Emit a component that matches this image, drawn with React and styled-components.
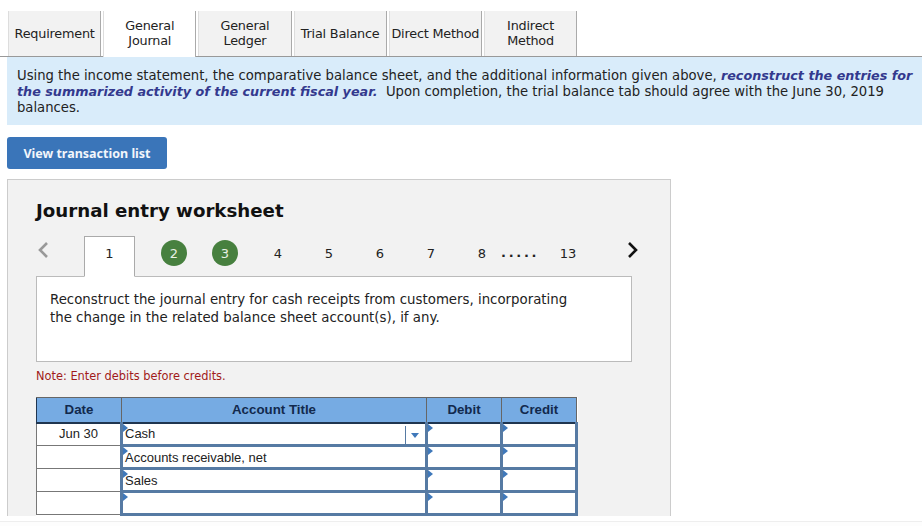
import styled, { createGlobalStyle } from 'styled-components'

const Global = createGlobalStyle`
  html, body {
    margin: 0;
    background: #fff;
    font-family: "DejaVu Sans", Verdana, sans-serif;
    color: #222;
  }
`

const Page = styled.div`
  width: 922px;
  height: 526px;
  overflow: hidden;
  padding-top: 11px;
  box-sizing: border-box;
`

const Tabs = styled.div`
  display: flex;
  gap: 2px;
  padding-left: 8px;
  height: 46px;
  border-bottom: 1px solid #999;
  box-sizing: border-box;
`

const Tab = styled.div`
  width: 93.2px;
  height: ${p => (p.$active ? '46px' : '45px')};
  box-sizing: border-box;
  display: flex;
  align-items: center;
  justify-content: center;
  text-align: center;
  font-size: 12.8px;
  line-height: 15px;
  letter-spacing: -0.2px;
  padding-bottom: ${p => (p.$active ? '2px' : '1px')};
  background: ${p => (p.$active ? '#fff' : '#f2f2f2')};
  border-right: 1px solid #aaa;
  border-left: 1px solid #ddd;
`

const Banner = styled.div`
  margin-left: 7px;
  height: 68px;
  box-sizing: border-box;
  background: #d9ecfa;
  padding: 11px 0 0 10px;
  font-size: 13.2px;
  line-height: 16px;
  em {
    font-size: 12.75px;
    font-weight: bold;
    color: #33398e;
  }
`

const ViewButton = styled.button`
  display: block;
  margin: 12px 0 10px 7px;
  width: 160px;
  height: 32px;
  border: 0;
  border-radius: 3px;
  background: #3a75b9;
  color: #f2f6fb;
  font-family: "Noto Sans", sans-serif;
  font-size: 12.5px;
  font-weight: bold;
`

const Panel = styled.section`
  margin-left: 7px;
  width: 664px;
  box-sizing: border-box;
  background: #f2f2f2;
  border: 1px solid #ccc;
  border-bottom: 0;
  padding: 0 28px;
`

const Title = styled.h2`
  margin: 20px 0 0;
  font-size: 18.2px;
  line-height: 22px;
  font-weight: bold;
  color: #111;
`

const Steps = styled.div`
  display: flex;
  align-items: flex-start;
  height: 40px;
  margin-top: 14px;
  position: relative;
  z-index: 1;
`

const Chevron = styled.svg`
  width: 16px;
  height: 18px;
  flex: none;
  margin-top: 5px;
  margin-left: ${p => p.$left}px;
  margin-right: ${p => p.$right}px;
`

const Step = styled.div`
  width: 26px;
  height: 26px;
  margin-top: 4px;
  margin-right: ${p => p.$gap ?? 25}px;
  flex: none;
  display: flex;
  align-items: center;
  justify-content: center;
  font-size: 13px;
  color: ${p => (p.$done ? '#e8f0e4' : '#222')};
  background: ${p => (p.$done ? '#47803f' : 'transparent')};
  border-radius: 50%;
`

const CurrentStep = styled.div`
  width: 51px;
  height: 41px;
  margin-right: 26px;
  padding-bottom: 6px;
  flex: none;
  box-sizing: border-box;
  display: flex;
  align-items: center;
  justify-content: center;
  font-size: 13px;
  background: #fff;
  border: 1px solid #aaa;
  border-bottom: 1px solid #fff;
`

const Dots = styled.span`
  width: 36px;
  flex: none;
  margin: 9px 18px 0 -19px;
  font-size: 13px;
  font-weight: bold;
  letter-spacing: 2.7px;
  text-align: center;
`

const Prompt = styled.div`
  width: 596px;
  height: 86px;
  box-sizing: border-box;
  background: #fff;
  border: 1px solid #bbb;
  padding: 14px 60px 0 13px;
  font-size: 13.33px;
  line-height: 18px;
`

const Note = styled.p`
  margin: 7px 0 14px;
  font-size: 11.4px;
  line-height: 14px;
  color: #a11a1a;
`

const Sheet = styled.table`
  width: 540px;
  table-layout: fixed;
  border-collapse: collapse;
  font-family: "Liberation Sans", Arial, sans-serif;
  background: #fff;
  border: 1px solid #666;
`

const Head = styled.th`
  height: 25px;
  padding: 0;
  box-sizing: border-box;
  width: ${p => p.$w}px;
  background: #76abe3;
  color: #12294d;
  font-size: 13.3px;
  font-weight: bold;
  border: 1px solid #666;
  border-bottom: 2px solid #1f3550;
  border-left-color: #1f3550;
`

const DateCell = styled.td`
  height: 23px;
  padding: 0 0 2px;
  box-sizing: border-box;
  text-align: center;
  font-size: 13px;
  color: #222;
  border: 1px solid #777;
`

const EntryCell = styled.td`
  height: 23px;
  padding: 1px 0 0 2px;
  box-sizing: border-box;
  position: relative;
  font-size: 13px;
  line-height: 18px;
  color: #222;
  border: 3px solid #567aa3;
  border-top-width: ${p => (p.$first ? '0' : '3px')};
  &::before {
    content: '';
    position: absolute;
    left: 0;
    top: 0;
    border-left: 5px solid #3f78ba;
    border-top: 4px solid transparent;
    border-bottom: 4px solid transparent;
  }
`

const Drop = styled.span`
  position: absolute;
  right: 0;
  top: 2px;
  width: 19px;
  height: 18px;
  border-left: 1px solid #567aa3;
  &::after {
    content: '';
    position: absolute;
    left: 5px;
    top: 7px;
    border-top: 5px solid #3f78ba;
    border-left: 4px solid transparent;
    border-right: 4px solid transparent;
  }
`

const FootLine = styled.div`
  margin-top: 5px;
  height: 6px;
  border-top: 1px solid #eeeeee;
  background: #fdfdfd;
`

const rows = [
  { date: 'Jun 30', title: 'Cash', drop: true },
  { date: '', title: 'Accounts receivable, net' },
  { date: '', title: 'Sales' },
  { date: '', title: '' },
]

export default function App() {
  return (
    <Page>
      <Global />
      <Tabs>
        <Tab>Requirement</Tab>
        <Tab $active>General<br />Journal</Tab>
        <Tab>General<br />Ledger</Tab>
        <Tab>Trial Balance</Tab>
        <Tab>Direct Method</Tab>
        <Tab>Indirect<br />Method</Tab>
      </Tabs>
      <Banner>
        Using the income statement, the comparative balance sheet, and the additional information given above,{' '}
        <em>reconstruct the entries for the summarized activity of the current fiscal year.</em>
        &nbsp; Upon completion, the trial balance tab should agree with the June 30, 2019 balances.
      </Banner>
      <ViewButton>View transaction list</ViewButton>
      <Panel>
        <Title>Journal entry worksheet</Title>
        <Steps>
          <Chevron $left={0} $right={32} viewBox="0 0 16 18">
            <path d="M11 2 L4 9 L11 16" fill="none" stroke="#999" strokeWidth="2.6" />
          </Chevron>
          <CurrentStep>1</CurrentStep>
          <Step $done>2</Step>
          <Step $done $gap={27}>3</Step>
          <Step>4</Step>
          <Step>5</Step>
          <Step>6</Step>
          <Step>7</Step>
          <Step>8</Step>
          <Dots>.....</Dots>
          <Step>13</Step>
          <Chevron $left={18} $right={0} viewBox="0 0 16 18">
            <path d="M5 2 L12 9 L5 16" fill="none" stroke="#111" strokeWidth="2.6" />
          </Chevron>
        </Steps>
        <Prompt>
          Reconstruct the journal entry for cash receipts from customers, incorporating
          the change in the related balance sheet account(s), if any.
        </Prompt>
        <Note>Note: Enter debits before credits.</Note>
        <Sheet>
          <thead>
            <tr>
              <Head $w={85}>Date</Head>
              <Head $w={305}>Account Title</Head>
              <Head $w={75}>Debit</Head>
              <Head $w={75}>Credit</Head>
            </tr>
          </thead>
          <tbody>
            {rows.map((row, i) => (
              <tr key={i}>
                <DateCell>{row.date}</DateCell>
                <EntryCell $first={i === 0}>
                  {row.title}
                  {row.drop && <Drop />}
                </EntryCell>
                <EntryCell $first={i === 0} />
                <EntryCell $first={i === 0} />
              </tr>
            ))}
          </tbody>
        </Sheet>
      </Panel>
      <FootLine />
    </Page>
  )
}
